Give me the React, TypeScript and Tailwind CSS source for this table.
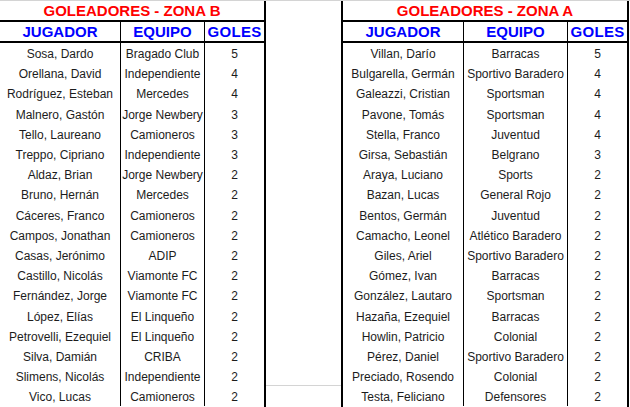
import React from "react";

// Filas de cada zona: [jugador, equipo, goles]
type Row = [string, string, number];

const zonaB: Row[] = [
  ["Sosa, Dardo", "Bragado Club", 5],
  ["Orellana, David", "Independiente", 4],
  ["Rodríguez, Esteban", "Mercedes", 4],
  ["Malnero, Gastón", "Jorge Newbery", 3],
  ["Tello, Laureano", "Camioneros", 3],
  ["Treppo, Cipriano", "Independiente", 3],
  ["Aldaz, Brian", "Jorge Newbery", 2],
  ["Bruno, Hernán", "Mercedes", 2],
  ["Cáceres, Franco", "Camioneros", 2],
  ["Campos, Jonathan", "Camioneros", 2],
  ["Casas, Jerónimo", "ADIP", 2],
  ["Castillo, Nicolás", "Viamonte FC", 2],
  ["Fernández, Jorge", "Viamonte FC", 2],
  ["López, Elías", "El Linqueño", 2],
  ["Petrovelli, Ezequiel", "El Linqueño", 2],
  ["Silva, Damián", "CRIBA", 2],
  ["Slimens, Nicolás", "Independiente", 2],
  ["Vico, Lucas", "Camioneros", 2],
];

const zonaA: Row[] = [
  ["Villan, Darío", "Barracas", 5],
  ["Bulgarella, Germán", "Sportivo Baradero", 4],
  ["Galeazzi, Cristian", "Sportsman", 4],
  ["Pavone, Tomás", "Sportsman", 4],
  ["Stella, Franco", "Juventud", 4],
  ["Girsa, Sebastián", "Belgrano", 3],
  ["Araya, Luciano", "Sports", 2],
  ["Bazan, Lucas", "General Rojo", 2],
  ["Bentos, Germán", "Juventud", 2],
  ["Camacho, Leonel", "Atlético Baradero", 2],
  ["Giles, Ariel", "Sportivo Baradero", 2],
  ["Gómez, Ivan", "Barracas", 2],
  ["González, Lautaro", "Sportsman", 2],
  ["Hazaña, Ezequiel", "Barracas", 2],
  ["Howlin, Patricio", "Colonial", 2],
  ["Pérez, Daniel", "Sportivo Baradero", 2],
  ["Preciado, Rosendo", "Colonial", 2],
  ["Testa, Feliciano", "Defensores", 2],
];

interface TableProps {
  title: string;
  rows: Row[];
  cols: string;
  className: string;
}

const ScorersTable: React.FC<TableProps> = ({ title, rows, cols, className }) => (
  <div className={`flex flex-col ${className}`}>
    {/* Titulo */}
    <div className="h-[21px] border-b-2 border-black flex items-center justify-center text-[15px] font-bold text-[#ff0000] leading-none">
      {title}
    </div>
    {/* Encabezado */}
    <div className={`grid ${cols} h-[21px] border-b-2 border-black text-[15px] font-bold text-[#0000ff] leading-none`}>
      <div className="border-r border-black flex items-center justify-center">JUGADOR</div>
      <div className="border-r border-black flex items-center justify-center">EQUIPO</div>
      <div className="flex items-center justify-center tracking-[0.3px]">GOLES</div>
    </div>
    {/* Datos */}
    <div className={`grid ${cols} text-[12px] text-[#1c1c1c] leading-none`}>
      {rows.map(([name, team, goals]) => (
        <React.Fragment key={name}>
          <div className="h-[20.2px] border-r border-black flex items-center justify-center pt-[2px] whitespace-nowrap">{name}</div>
          <div className="h-[20.2px] border-r border-black flex items-center justify-center pt-[2px] whitespace-nowrap">{team}</div>
          <div className="h-[20.2px] flex items-center justify-center pt-[2px]">{goals}</div>
        </React.Fragment>
      ))}
    </div>
  </div>
);

const App: React.FC = () => {
  return (
    <div
      className="w-[630px] h-[407px] overflow-hidden bg-white border-t border-[#d4d4d4] flex"
      style={{ fontFamily: '"Liberation Sans", Arial, sans-serif' }}
    >
      <ScorersTable
        title="GOLEADORES - ZONA B"
        rows={zonaB}
        cols="grid-cols-[121px_84px_59px]"
        className="w-[266px] border-r-2 border-black"
      />
      {/* Columna vacia entre zonas */}
      <div className="w-[75px] flex flex-col">
        <div className="h-[385px] border-b border-[#d4d4d4]"></div>
      </div>
      <ScorersTable
        title="GOLEADORES - ZONA A"
        rows={zonaA}
        cols="grid-cols-[121px_104px_59px]"
        className="w-[288px] border-x-2 border-black"
      />
    </div>
  );
};

export default App;
